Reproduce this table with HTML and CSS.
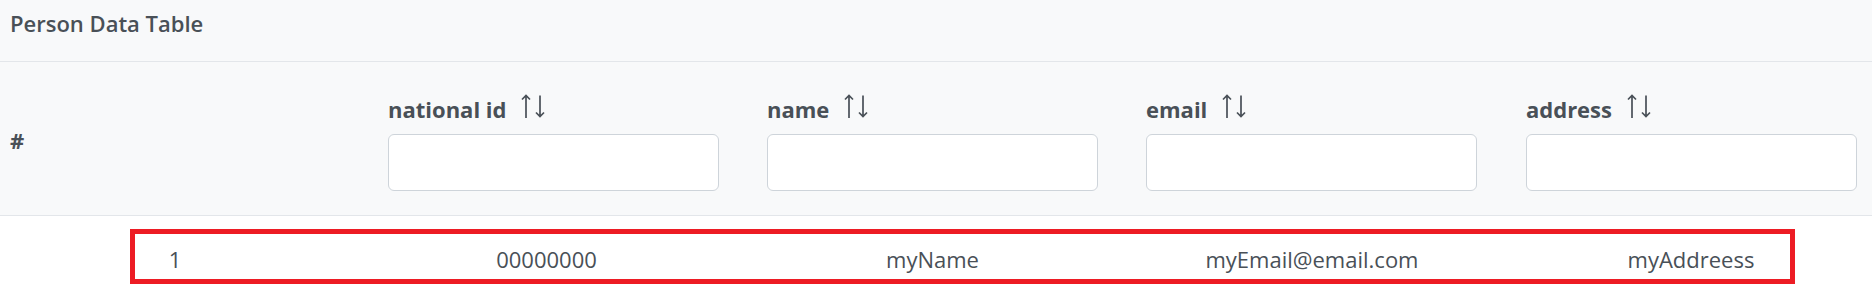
FILE: index.html
```html
<!DOCTYPE html>
<html lang="en">
<head>
<meta charset="utf-8">
<title>Person Data Table</title>
<link rel="stylesheet" href="styles.css">
</head>
<body>
<div class="card">
  <div class="card-title">Person Data Table</div>
  <div class="thead">
    <div class="th th-index">#</div>
    <div class="th">
      <div class="th-label">national id<svg class="sort" viewBox="0 0 24 24" width="24" height="24"><path d="M5 24V1.5M1 5.5L5 1.5L9 5.5M19 1.5V22.5M15 18.5L19 22.5L23 18.5"/></svg></div>
      <input class="filter" type="text">
    </div>
    <div class="th">
      <div class="th-label">name<svg class="sort" viewBox="0 0 24 24" width="24" height="24"><path d="M5 24V1.5M1 5.5L5 1.5L9 5.5M19 1.5V22.5M15 18.5L19 22.5L23 18.5"/></svg></div>
      <input class="filter" type="text">
    </div>
    <div class="th">
      <div class="th-label">email<svg class="sort" viewBox="0 0 24 24" width="24" height="24"><path d="M5 24V1.5M1 5.5L5 1.5L9 5.5M19 1.5V22.5M15 18.5L19 22.5L23 18.5"/></svg></div>
      <input class="filter" type="text">
    </div>
    <div class="th">
      <div class="th-label">address<svg class="sort" viewBox="0 0 24 24" width="24" height="24"><path d="M5 24V1.5M1 5.5L5 1.5L9 5.5M19 1.5V22.5M15 18.5L19 22.5L23 18.5"/></svg></div>
      <input class="filter" type="text">
    </div>
  </div>
  <div class="trow">
    <div class="td">1</div>
    <div class="td">00000000</div>
    <div class="td">myName</div>
    <div class="td">myEmail@email.com</div>
    <div class="td td-last">myAddreess</div>
  </div>
  <div class="annotation"></div>
</div>
</body>
</html>
```

FILE: styles.css
```css
html, body {
  margin: 0;
  padding: 0;
  background: #ffffff;
}

body {
  font-family: "Open Sans", "Noto Sans", "Liberation Sans", sans-serif;
  color: #495057;
}

.card {
  position: relative;
  width: 1872px;
  height: 294px;
  overflow: hidden;
}

.card-title {
  background: #f8f9fa;
  font-size: 22px;
  font-weight: 600;
  line-height: 30px;
  padding: 8px 10px 23px;
  border-bottom: 1px solid #e3e6ea;
}

.thead {
  display: grid;
  grid-template-columns: 378px 379px 379px 380px 1fr;
  background: #f8f9fa;
  border-bottom: 1px solid #e3e6ea;
}

.th {
  display: flex;
  flex-direction: column;
  padding: 32px 0 24px 10px;
  font-size: 22px;
  font-weight: 700;
  line-height: 30px;
}

.th-index {
  justify-content: center;
  padding-top: 2px;
  padding-bottom: 0;
}

.th-label {
  white-space: nowrap;
  margin-bottom: 10px;
}

.sort {
  vertical-align: baseline;
  margin-left: 15px;
  fill: none;
  stroke: #495057;
  stroke-width: 1.7;
}

.filter {
  box-sizing: border-box;
  width: 331px;
  height: 57px;
  margin: 0;
  padding: 0 12px;
  border: 1px solid #ced4da;
  border-radius: 6px;
  background: #ffffff;
  font: inherit;
}

.trow {
  display: grid;
  grid-template-columns: 350px 393px 379px 380px 1fr;
  padding-top: 28px;
  font-size: 22px;
  line-height: 30px;
}

.td {
  text-align: center;
}

.td-last {
  padding-left: 8px;
}

.annotation {
  position: absolute;
  left: 130px;
  top: 229px;
  width: 1665px;
  height: 55px;
  box-sizing: border-box;
  border: 5px solid #ed1c24;
}
```
